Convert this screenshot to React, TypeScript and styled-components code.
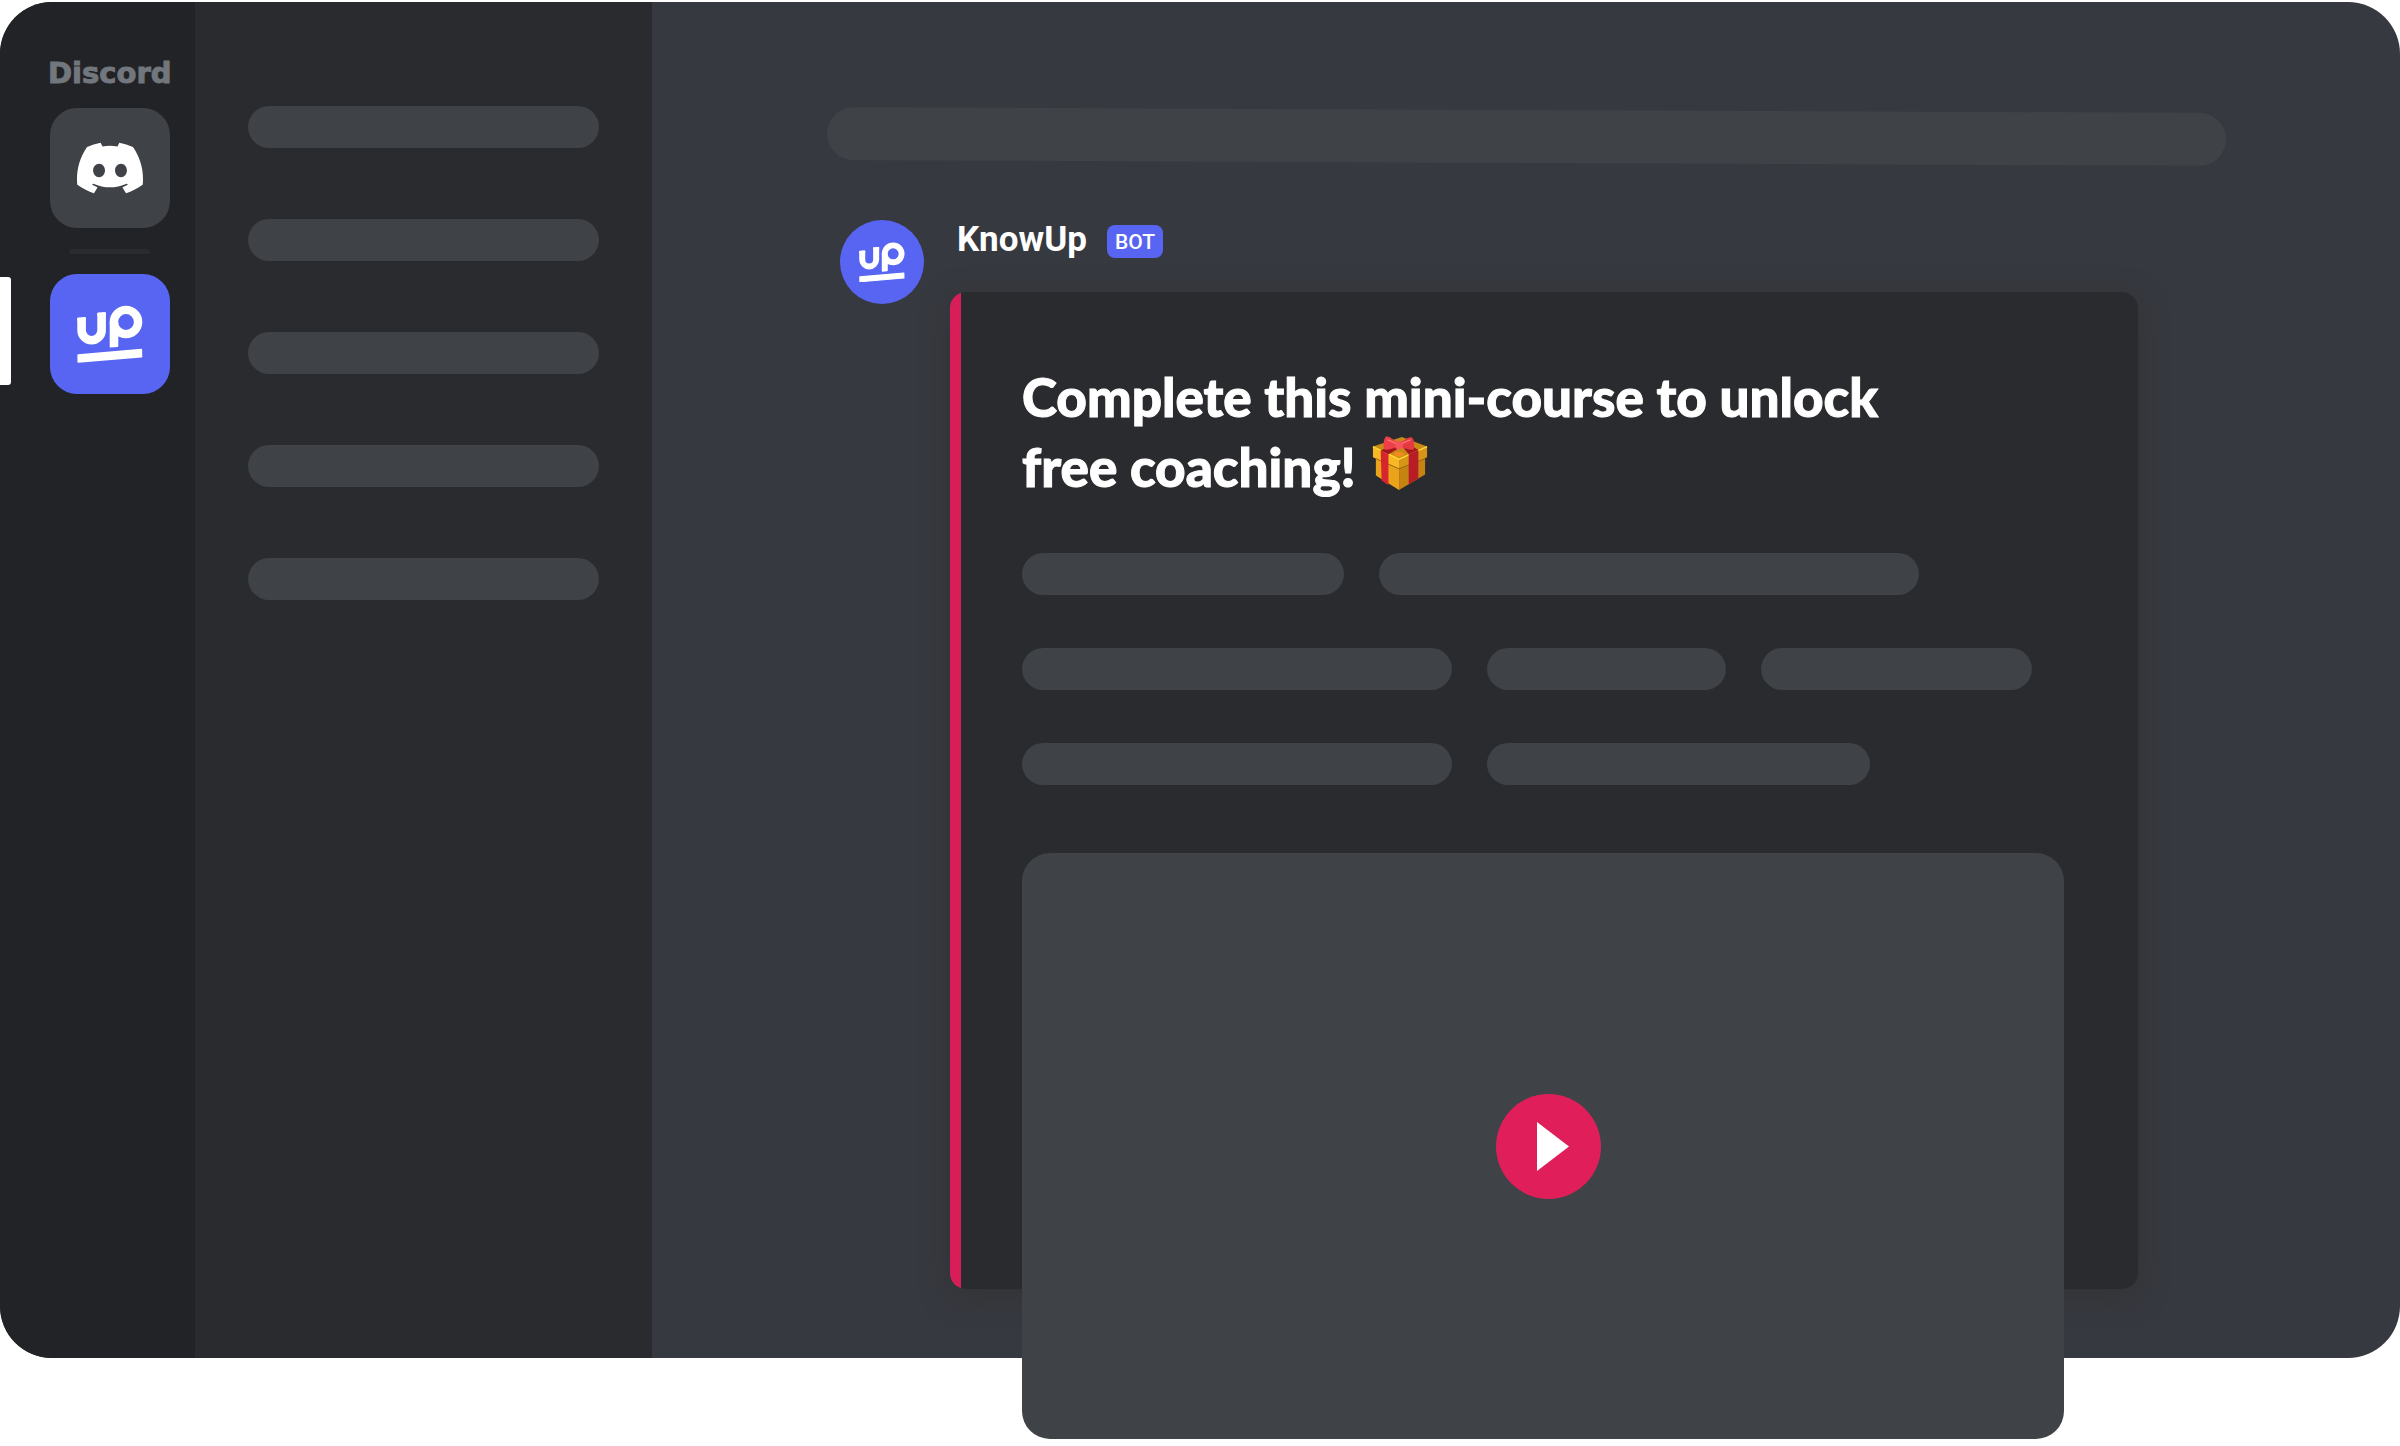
import React from 'react';
import styled, { createGlobalStyle } from 'styled-components';
import { SiDiscord } from 'react-icons/si';

const color = {
  rail: '#222326',
  panel: '#2a2b2e',
  main: '#373940',
  fill: '#3f4246',
  brand: '#5865f2',
  accent: '#e01f5a',
  muted: '#72767d',
};

const GlobalStyle = createGlobalStyle`
  *, *::before, *::after { box-sizing: border-box; }
  body { margin: 0; background: #fff; color: #fff; font-family: Roboto, "Liberation Sans", sans-serif; }
`;

const Page = styled.div`
  min-height: 100vh;
  padding-top: 2px;
`;

const Frame = styled.div`
  display: grid;
  grid-template-columns: 195px 457px minmax(0, 1fr);
  border-radius: 52px;
  background: ${color.main};
`;

const Rail = styled.nav`
  display: grid;
  grid-template-columns: 11px minmax(0, 1fr);
  align-content: start;
  justify-items: center;
  padding: 53px 25px 0 0;
  border-radius: 52px 0 0 52px;
  background: ${color.rail};
`;

const RailLabel = styled.span`
  grid-column: 2;
  margin: 0 0 17px 37px;
  justify-self: start;
  color: ${color.muted};
  font: 700 29px/36px "DejaVu Sans", sans-serif;
  -webkit-text-stroke: 1px ${color.muted};
`;

const Tile = styled.button<{ $brand?: boolean }>`
  grid-column: 2;
  justify-self: end;
  display: grid;
  place-items: center;
  width: 120px;
  height: 120px;
  padding: 0;
  border: 0;
  border-radius: 27px;
  background: ${(p) => (p.$brand ? color.brand : color.fill)};
  color: #fff;
  cursor: pointer;
`;

const Divider = styled.hr`
  grid-column: 2;
  justify-self: end;
  width: 81px;
  height: 5px;
  margin: 21px 20px 20px;
  border: 0;
  border-radius: 3px;
  background: ${color.panel};
`;

const ActiveMark = styled.span`
  grid-column: 1;
  align-self: center;
  width: 11px;
  height: 108px;
  margin-bottom: 6px;
  border-radius: 0 3px 3px 0;
  background: #fff;
`;

const Channels = styled.aside`
  display: flex;
  flex-direction: column;
  gap: 71px;
  padding: 104px 53px 0;
  background: ${color.panel};
`;

const Pill = styled.div<{ $width?: number }>`
  flex: ${(p) => (p.$width ? `0 1 ${p.$width}px` : '0 0 auto')};
  height: 42px;
  border-radius: 21px;
  background: ${color.fill};
`;

const Main = styled.main`
  padding: 108px 174px 69px 175px;
`;

const TopBar = styled.div`
  height: 53px;
  border-radius: 27px;
  background: ${color.fill};
  transform: rotate(0.24deg);
`;

const Message = styled.article`
  display: grid;
  grid-template-columns: 84px minmax(0, 1fr);
  column-gap: 26px;
  margin: 55px 88px 0 13px;
`;

const Avatar = styled.div`
  display: grid;
  place-items: center;
  width: 84px;
  height: 84px;
  margin-top: 2px;
  border-radius: 50%;
  background: ${color.brand};
`;

const Author = styled.header`
  display: flex;
  align-items: center;
  gap: 20px;
  height: 44px;
  margin: 0 0 30px 7px;
`;

const Name = styled.span`
  font-size: 35px;
  font-weight: 700;
  line-height: 42px;
`;

const BotTag = styled.span`
  height: 33px;
  margin-top: 2px;
  padding: 0 8px;
  border-radius: 8px;
  background: ${color.brand};
  font-size: 21px;
  font-weight: 500;
  line-height: 34px;
`;

const Card = styled.section`
  display: flow-root;
  padding: 70px 74px 0 72px;
  border-radius: 16px;
  background: linear-gradient(90deg, #d81e58 11px, ${color.panel} 11px);
  box-shadow: 0 7px 28px rgba(48, 48, 40, 0.55);
`;

const Title = styled.h1`
  margin: 0 0 51px;
  font: 900 53px/70px Lato, "Open Sans", sans-serif;
  -webkit-text-stroke: 1px #fff;
`;

const Gift = styled.svg`
  width: 56px;
  height: 56px;
  margin-left: 16px;
  vertical-align: -4px;
`;

const Lines = styled.div`
  display: grid;
  gap: 53px;
`;

const Line = styled.div`
  display: flex;
  gap: 35px;
`;

const Video = styled.div`
  display: grid;
  place-items: center;
  aspect-ratio: 16 / 9;
  margin: 68px 0 -150px;
  padding-left: 10px;
  border-radius: 28px;
  background: ${color.fill};
`;

const Play = styled.button`
  display: grid;
  place-items: center;
  width: 105px;
  height: 105px;
  padding: 0 0 0 9px;
  border: 0;
  border-radius: 50%;
  background: ${color.accent};
  cursor: pointer;
`;

const UpLogo = ({ width }: { width: number }) => (
  <svg width={width} viewBox="0 0 66 58" fill="none" aria-hidden="true">
    <path d="M4.6 13v12.200a10 10 0 0 0 20 0V8" stroke="#fff" strokeWidth="8.600" />
    <path d="M0.300 13.500q0-1 1-1.100l6.600-.5q1-.1 1 .9v3H.3zM20.300 8.600q0-1 1-1.100l6.600-.5q1-.1 1 .9v3h-8.600z" fill="#fff" />
    <circle cx="49" cy="17" r="12.100" stroke="#fff" strokeWidth="8.400" />
    <path d="M32.700 17h8.600v24q0 1-1 1.100l-6.600.5q-1 .1-1-.9z" fill="#fff" />
    <path d="M1.200 50 64.300 44.500l.2 7.200L1.300 57z" fill="#fff" stroke="#fff" strokeWidth="1.600" strokeLinejoin="round" />
  </svg>
);

const GiftIcon = () => (
  <Gift viewBox="0 0 58 58" role="img" aria-label="gift">
    <path d="M1 12 31 2l26 10-29 15z" fill="#c98a16" />
    <path d="M4 20v22l24 15V28z" fill="#eaa41c" />
    <path d="M28 28v29l27-16V20z" fill="#c48312" />
    <path d="M1 12v11l27 12V25z" fill="#f6b824" />
    <path d="M28 25v10l29-12V12z" fill="#d69518" />
    <path d="m1 12 27 13 29-13" fill="none" stroke="#ffd633" strokeWidth="1.500" />
    <path d="M4 24.500 28 35l27-10.500" fill="none" stroke="#9a6410" strokeWidth="1" />
    <path d="m9 16 8 4v32l-7-5z" fill="#d6252e" />
    <path d="m38 20 10-4.500V45l-10 6z" fill="#b81d25" />
    <path d="m9 16 16-8 8 3-16 9zM30 10l6-2 12 7.500L38 20z" fill="#a4161d" />
    <ellipse cx="28" cy="20" rx="5" ry="2.500" fill="#f58a1f" />
    <path d="M27 9C22 4 16 0 14 2c-2 3-3 9-1 13 4 1 10-1 14-4z" fill="#ee4048" />
    <path d="M29 9c5-5 11-8 13-6 2 3 2 9 1 12-5 1-10-1-14-4z" fill="#e63a42" />
    <path d="M25 9q-5-3-9-4M31 9q5-3 9-4" fill="none" stroke="#fa7378" strokeWidth="1.500" />
    <rect x="24" y="6" width="8" height="9" rx="3.500" fill="#f4545a" />
  </Gift>
);

const channelRows = [0, 1, 2, 3, 4];
const textRows = [
  [322, 540],
  [430, 239, 271],
  [430, 383],
];

export default function App() {
  return (
    <>
      <GlobalStyle />
      <Page>
        <Frame>
          <Rail aria-label="Servers">
            <RailLabel>Discord</RailLabel>
            <Tile type="button" aria-label="Home">
              <SiDiscord size={66} />
            </Tile>
            <Divider />
            <ActiveMark />
            <Tile type="button" $brand aria-label="KnowUp server">
              <UpLogo width={66} />
            </Tile>
          </Rail>
          <Channels>
            {channelRows.map((row) => (
              <Pill key={row} />
            ))}
          </Channels>
          <Main>
            <TopBar />
            <Message>
              <Avatar>
                <UpLogo width={46} />
              </Avatar>
              <div>
                <Author>
                  <Name>KnowUp</Name>
                  <BotTag>BOT</BotTag>
                </Author>
                <Card>
                  <Title>
                    Complete this mini-course to unlock
                    <br />
                    free coaching!
                    <GiftIcon />
                  </Title>
                  <Lines>
                    {textRows.map((row, i) => (
                      <Line key={i}>
                        {row.map((width, j) => (
                          <Pill key={j} $width={width} />
                        ))}
                      </Line>
                    ))}
                  </Lines>
                  <Video>
                    <Play type="button" aria-label="Play video">
                      <svg width="32" height="49" viewBox="0 0 32 49" aria-hidden="true">
                        <path d="M0 0v49l32-24.500z" fill="#fff" />
                      </svg>
                    </Play>
                  </Video>
                </Card>
              </div>
            </Message>
          </Main>
        </Frame>
      </Page>
    </>
  );
}
